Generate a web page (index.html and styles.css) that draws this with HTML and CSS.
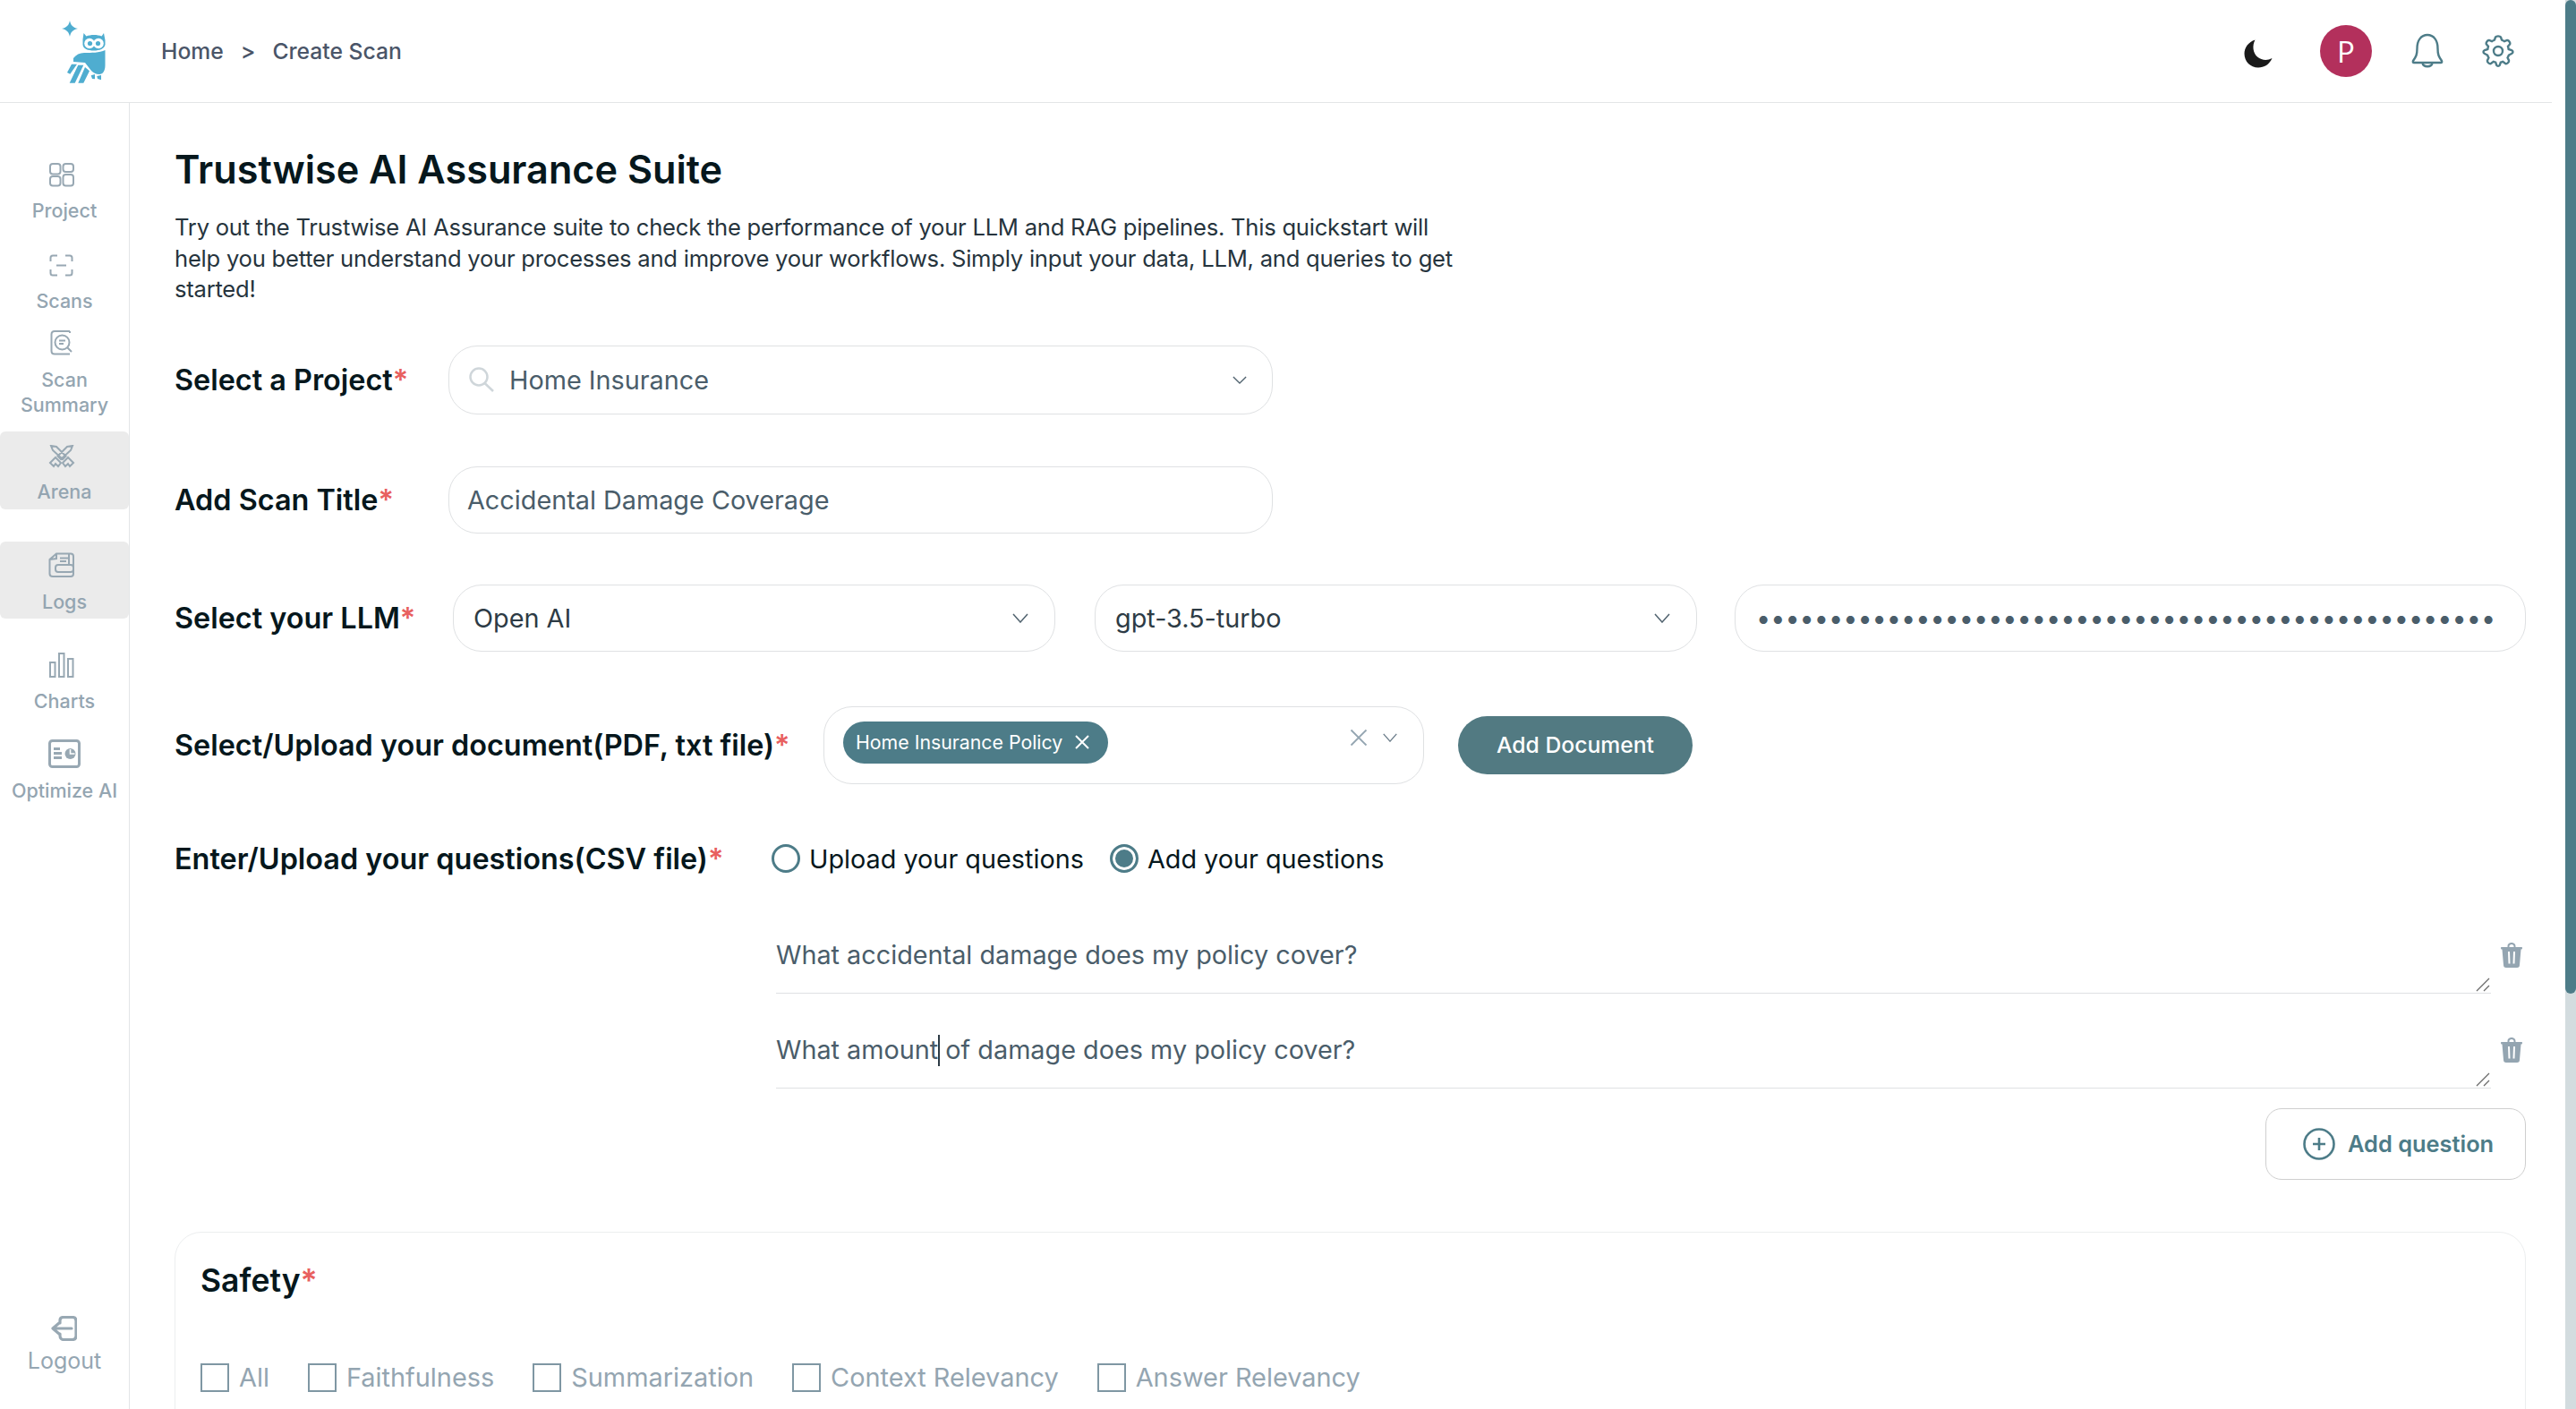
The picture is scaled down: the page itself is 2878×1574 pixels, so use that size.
FILE: index.html
```html
<!DOCTYPE html>
<html lang="en">
<head>
<meta charset="utf-8">
<title>Create Scan</title>
<link rel="stylesheet" href="styles.css">
</head>
<body>
<div class="app">
  <div class="page">
    <header class="topbar">
      <div class="logo-cell">
        <svg class="logo" viewBox="0 0 60 72" width="60" height="72">
          <path class="logo-fill" d="M10 2 C11 7 13 9.500 19 11 C13 12.500 11 15 10 20 C9 15 7 12.500 1 11 C7 9.500 9 7 10 2Z"/>
          <path class="logo-fill" d="M25.500 16 L28.500 19.500 C33 17.500 41 17.500 45.500 19.500 L48 16 L49.500 24 L49.500 29 C48.500 33.500 43 35.500 37 35.500 C30 35.500 25 33.500 24.500 29 L24.500 23Z"/>
          <circle class="logo-eye" cx="32" cy="27.500" r="5.800"/>
          <circle class="logo-eye" cx="42" cy="27.500" r="5.800"/>
          <circle class="logo-fill" cx="32.500" cy="27.500" r="2.600"/>
          <circle class="logo-fill" cx="41.500" cy="27.500" r="2.600"/>
          <path class="logo-fill" d="M14 44 C17 40 21 38 26 38 C34 38 43 38 49.500 35 L49.500 52 C49.500 58 47 62 43 62 C39 62 36 60 34 58 L27 49 L14 48Z"/>
          <path class="logo-fill" d="M12 50.700 L18 50.700 L10.300 61.700 L7 60Z M19.300 51.700 L25.300 51.700 L15.700 71.700 L9.700 71.700Z M27 54 L32 58.300 L25.300 71.700 L19.300 71.700Z M33.700 63.300 L38 62 L38 67.300 L35 67Z M40.300 64 L45 63 L45 68.300 L41 67Z"/>
        </svg>
      </div>
      <nav class="crumbs"><span>Home</span><span class="crumb-sep">&gt;</span><span>Create Scan</span></nav>
      <div class="top-actions">
        <svg class="moon" viewBox="0 0 32 32" width="32" height="32"><path d="M12.500 0.500 C9 7 10 15 15 19.500 C20 23.500 26 24 31.500 21 C28.500 28 22.500 31.500 16 31.500 C7 31.500 0.500 24.500 0.500 16 C0.500 9 5 3 12.500 0.500Z"/></svg>
        <div class="avatar">P</div>
        <svg class="bell" viewBox="0 0 36 40" width="36" height="40"><path d="M6.500 17 C6.500 8 11 2 18 2 C25 2 29.500 8 29.500 17 C29.500 24 30.500 26 34 31 C34.500 32.500 34 33 33 33 L3 33 C2 33 1.500 32.500 2 31 C5.500 26 6.500 24 6.500 17Z M12.500 33.500 C13.500 38.500 22.500 38.500 23.500 33.500"/></svg>
        <svg class="gear" viewBox="0 0 36 36" width="36" height="36"><circle cx="18" cy="18" r="5"/><path d="M15 2.500 C16 1 20 1 21 2.500 L22 5.500 C23 6.200 24 6.600 25 7.200 L28 6 C30 5.600 32 9 31 10.500 L29 12.800 C29.400 14 29.500 15 29.700 16 L33 17 C35 18 35 20 33 21 L30 22.500 C29.600 23.600 29.200 24.600 28.600 25.500 L30 28.500 C30.500 30.500 27.500 33 25.800 31.800 L23.200 29.800 C22.200 30.200 21.400 30.500 20.800 30.700 L19.800 33.800 C19 35 17 35 16.200 33.800 L15.200 30.700 C14.400 30.500 13.600 30.200 12.800 29.800 L10.200 31.800 C8.500 33 5.500 30.500 6 28.500 L7.400 25.500 C6.800 24.600 6.400 23.600 6 22.500 L3 21 C1 20 1 18 3 17 L6.300 16 C6.500 15 6.600 14 7 12.800 L5 10.500 C4 9 6 5.600 8 6 L11 7.200 C12 6.600 13 6.200 14 5.500Z"/></svg>
      </div>
    </header>
    <div class="body-row">
      <aside class="sidebar">
        <a class="nav-item nav-project">
          <svg class="nav-icon" viewBox="0 0 28 27" width="28" height="27"><rect x="1" y="1" width="11.500" height="11.500" rx="3"/><rect x="15.500" y="1" width="11.500" height="9" rx="3"/><rect x="1" y="15" width="11.500" height="10.500" rx="3"/><rect x="15.500" y="13" width="11.500" height="12.500" rx="3"/></svg>
          <span>Project</span>
        </a>
        <a class="nav-item nav-scans">
          <svg class="nav-icon" viewBox="0 0 28 25" width="28" height="25"><path d="M1.500 8 V4 C1.500 2.500 2.500 1.500 4 1.500 H9 M18 1.500 H23 C24.500 1.500 25.500 2.500 25.500 4 V8 M1.500 17 V21 C1.500 22.500 2.500 23.500 4 23.500 H9 M18 23.500 H23 C24.500 23.500 25.500 22.500 25.500 21 V17 M8 12.500 H19"/></svg>
          <span>Scans</span>
        </a>
        <a class="nav-item nav-summary">
          <svg class="nav-icon" viewBox="0 0 26 28" width="26" height="28"><path d="M22 1 H5 C3 1 1.500 2.500 1.500 4.500 V23 C1.500 25 3 26.500 5 26.500 H22 M22 1 V3"/><circle cx="13.500" cy="13.500" r="8"/><path d="M10 11.500 H17 M10 15 H15 M19.500 19.500 L24 24"/></svg>
          <span>Scan<br>Summary</span>
        </a>
        <a class="nav-item nav-arena is-active">
          <svg class="nav-icon" viewBox="0 0 30 26" width="30" height="26"><path d="M3 1 L9 2 L19.500 12.500 L16 16 L5 6Z M27 1 L21 2 L10.500 12.500 L14 16 L25 6Z M2 20 L8 14 L14 20 L11 24 L8 21 L6 24Z M28 20 L22 14 L16 20 L19 24 L22 21 L24 24Z"/></svg>
          <span>Arena</span>
        </a>
        <a class="nav-item nav-logs is-active">
          <svg class="nav-icon" viewBox="0 0 30 28" width="30" height="28"><path d="M9 1.500 H25 C27 1.500 28 2.500 28 4.500 V24 C28 26 27 27 25 27 H5 C3 27 1.500 26 1.500 24 V8 Z M9 1.500 V7 L1.500 8"/><rect x="8" y="14" width="20" height="8" rx="3"/><path d="M13 6.500 H22 M13 10 H20 M23 2 V14"/></svg>
          <span>Logs</span>
        </a>
        <a class="nav-item nav-charts">
          <svg class="nav-icon" viewBox="0 0 28 28" width="28" height="28"><rect x="1" y="11" width="5.500" height="16"/><rect x="11" y="1" width="5.500" height="26"/><rect x="21" y="7" width="5.500" height="20"/></svg>
          <span>Charts</span>
        </a>
        <a class="nav-item nav-optimize">
          <svg class="nav-icon nav-icon-bold" viewBox="0 0 36 32" width="36" height="32"><rect x="1.500" y="1.500" width="33" height="29" rx="3"/><path d="M6 10.500 H13 M6 15.500 H15 M6 20.500 H15"/><circle class="nav-icon-solid" cx="24.500" cy="16" r="6"/><path class="pie-cut" d="M24.500 11 V16 H29.500"/></svg>
          <span>Optimize AI</span>
        </a>
        <a class="nav-item nav-logout">
          <svg class="logout-icon" viewBox="0 0 30 28" width="30" height="28"><path d="M11 8 V5 C11 2.500 13 1.500 15 1.500 H25 C27.500 1.500 29 3 29 5.500 V22.500 C29 25 27.500 26.500 25 26.500 H15 C13 26.500 11 25 11 22 V20 M24 14 H4 M10 8 L3 14 L10 20"/></svg>
          <span>Logout</span>
        </a>
      </aside>
      <main class="content">
        <h1 class="title">Trustwise AI Assurance Suite</h1>
        <p class="intro">Try out the Trustwise AI Assurance suite to check the performance of your LLM and RAG pipelines. This quickstart will help you better understand your processes and improve your workflows. Simply input your data, LLM, and queries to get started!</p>

        <div class="row row-project">
          <label class="field-label label-short">Select a Project<em>*</em></label>
          <div class="box box-wide">
            <svg class="search-icon" viewBox="0 0 28 28" width="28" height="28"><circle cx="11" cy="11" r="9.500"/><path d="M17.500 18 L27 27"/></svg>
            <span class="value value-muted">Home Insurance</span>
            <svg class="chevron chevron-small" viewBox="0 0 18 10" width="16" height="9"><path d="M1 1 L9 9 L17 1"/></svg>
          </div>
        </div>

        <div class="row row-title">
          <label class="field-label label-short">Add Scan Title<em>*</em></label>
          <div class="box box-wide box-title"><span class="value value-muted">Accidental Damage Coverage</span></div>
        </div>

        <div class="row row-llm">
          <label class="field-label label-llm">Select your LLM<em>*</em></label>
          <div class="box box-llm"><span class="value">Open AI</span><svg class="chevron" viewBox="0 0 18 11" width="18" height="11"><path d="M1 1 L9 10 L17 1"/></svg></div>
          <div class="box box-llm box-model"><span class="value">gpt-3.5-turbo</span><svg class="chevron" viewBox="0 0 18 11" width="18" height="11"><path d="M1 1 L9 10 L17 1"/></svg></div>
          <div class="box box-key"><span class="dots">•••••••••••••••••••••••••••••••••••••••••••••••••••</span></div>
        </div>

        <div class="row row-doc">
          <label class="field-label label-doc">Select/Upload your document(PDF, txt file)<em>*</em></label>
          <div class="box box-doc">
            <span class="chip">Home Insurance Policy<svg class="chip-x" viewBox="0 0 18 18" width="18" height="18"><path d="M2 2 L16 16 M16 2 L2 16"/></svg></span>
            <svg class="clear-x" viewBox="0 0 20 20" width="20" height="20"><path d="M1.500 1.500 L18.500 18.500 M18.500 1.500 L1.500 18.500"/></svg>
            <svg class="chevron chevron-doc" viewBox="0 0 18 11" width="20" height="10"><path d="M1 1 L9 10 L17 1"/></svg>
          </div>
          <button class="btn-primary" type="button">Add Document</button>
        </div>

        <div class="row row-radio">
          <label class="field-label label-questions">Enter/Upload your questions(CSV file)<em>*</em></label>
          <span class="radio"></span><span class="radio-text">Upload your questions</span>
          <span class="radio radio-on"></span><span class="radio-text">Add your questions</span>
        </div>

        <div class="questions">
          <div class="q-row">
            <div class="q-input">What accidental damage does my policy cover?<svg class="grip" viewBox="0 0 16 16" width="16" height="16"><path d="M1 15 L15 1 M9 15 L15 9"/></svg></div>
            <svg class="trash" viewBox="0 0 24 28" width="24" height="28"><path d="M7.500 5 V4 C7.500 1 10 0 12 0 C14 0 16.500 1 16.500 4 V5 H23 C23.800 5 24 5.500 24 6 C24 7 23.500 7.500 22.500 7.500 L21 25 C21 27 20 28 18 28 H6 C4 28 3 27 3 25 L1.500 7.500 C0.500 7.500 0 7 0 6 C0 5.500 0.200 5 1 5Z M9.500 5 H14.500 V4 C14.500 3 13.500 2 12 2 C10.500 2 9.500 3 9.500 4Z M8 10 L8.500 23.500 H10.500 L10 10Z M14 10 L13.500 23.500 H15.500 L16 10Z" fill-rule="evenodd"/></svg>
          </div>
          <div class="q-row q-row-next">
            <div class="q-input">What amount<span class="caret"></span> of damage does my policy cover?<svg class="grip" viewBox="0 0 16 16" width="16" height="16"><path d="M1 15 L15 1 M9 15 L15 9"/></svg></div>
            <svg class="trash" viewBox="0 0 24 28" width="24" height="28"><path d="M7.500 5 V4 C7.500 1 10 0 12 0 C14 0 16.500 1 16.500 4 V5 H23 C23.800 5 24 5.500 24 6 C24 7 23.500 7.500 22.500 7.500 L21 25 C21 27 20 28 18 28 H6 C4 28 3 27 3 25 L1.500 7.500 C0.500 7.500 0 7 0 6 C0 5.500 0.200 5 1 5Z M9.500 5 H14.500 V4 C14.500 3 13.500 2 12 2 C10.500 2 9.500 3 9.500 4Z M8 10 L8.500 23.500 H10.500 L10 10Z M14 10 L13.500 23.500 H15.500 L16 10Z" fill-rule="evenodd"/></svg>
          </div>
          <div class="q-actions">
            <button class="btn-add" type="button">
              <svg class="plus" viewBox="0 0 36 36" width="36" height="36"><circle cx="18" cy="18" r="16.500"/><path d="M18 11 V25 M11 18 H25"/></svg>
              Add question
            </button>
          </div>
        </div>

        <section class="card">
          <h2 class="card-title">Safety<em>*</em></h2>
          <div class="checks">
            <label class="check check-all"><span class="box-check"></span>All</label>
            <label class="check check-next"><span class="box-check"></span>Faithfulness</label>
            <label class="check check-next"><span class="box-check"></span>Summarization</label>
            <label class="check check-next"><span class="box-check"></span>Context Relevancy</label>
            <label class="check"><span class="box-check"></span>Answer Relevancy</label>
          </div>
        </section>
      </main>
    </div>
  </div>
  <div class="scrollbar"><div class="scrollbar-thumb"></div></div>
</div>
</body>
</html>
```
FILE: styles.css
```css
* { box-sizing: border-box; }
html, body { margin: 0; height: 100%; }
body { font-family: Inter, "Liberation Sans", sans-serif; background: #fff; color: #06171c; overflow: hidden; }

.app { display: flex; height: 1574px; overflow: hidden; }
.page { flex: 1; min-width: 0; display: flex; flex-direction: column; }
.scrollbar { width: 12px; background: #d3dcdf; }
.scrollbar-thumb { height: 1110px; background: #4d7c88; border-radius: 6px; }

.topbar { height: 115px; flex: none; display: flex; align-items: center; border-bottom: 1px solid #e3e5e7; margin-right: 15px; }
.logo-cell { width: 180px; padding-left: 68px; display: flex; }
.logo-fill { fill: #4fadd0; }
.logo-eye { fill: #fff; }
.crumbs { display: flex; align-items: center; font-size: 24.700px; font-weight: 500; color: #4a5568; gap: 19px; }
.crumb-sep { font-size: 25px; }
.top-actions { margin-left: auto; display: flex; align-items: center; padding-right: 42px; }
.moon { fill: #1a1a1a; margin-right: 53px; margin-top: 6px; }
.avatar { width: 58px; height: 58px; border-radius: 50%; background: #b3305c; color: #fff; display: flex; align-items: center; justify-content: center; font-size: 33px; font-family: "Open Sans", sans-serif; margin-right: 44px; }
.bell, .gear { fill: none; stroke: #4d7c88; stroke-width: 2.400; }
.bell { margin-right: 43px; }

.body-row { flex: 1; display: flex; min-height: 0; }
.sidebar { width: 145px; flex: none; border-right: 1px solid #e3e5e7; display: flex; flex-direction: column; padding-top: 67px; }
.nav-item { display: flex; flex-direction: column; align-items: center; gap: 13px; color: #94a5b1; font-size: 21.500px; font-weight: 500; line-height: 28px; text-align: center; }
.nav-item svg { display: block; }
.nav-icon { fill: none; stroke: #98a8b3; stroke-width: 2; margin-right: 7px; }
.nav-icon-bold { stroke-width: 3; margin-right: 0; }
.nav-icon-solid { fill: #98a8b3; stroke: none; }
.pie-cut { stroke: #fff; stroke-width: 1.600; }
.nav-item.is-active { background: #ebebeb; border-radius: 6px; width: 144px; }
.nav-project { gap: 12px; }
.nav-scans { margin-top: 35px; }
.nav-summary { margin-top: 19px; }
.nav-arena { margin-top: 16px; padding: 15px 0 6px; gap: 12px; }
.nav-logs { margin-top: 36px; padding: 12px 0 5px; }
.nav-charts { margin-top: 38px; gap: 12px; }
.nav-optimize { margin-top: 29px; gap: 11px; }
.nav-logout { margin-top: auto; margin-bottom: 39px; gap: 7px; color: #95a6b2; font-size: 25px; font-weight: 400; line-height: 30px; }
.logout-icon { fill: none; stroke: #98a8b3; stroke-width: 3.200; stroke-linecap: round; stroke-linejoin: round; margin-right: 2px; }

.content { flex: 1; min-width: 0; padding: 46px 44px 0 50px; overflow: hidden; }
.title { margin: 0; font-size: 43.200px; line-height: 56px; font-weight: 600; color: #06171c; }
.intro { margin: 20px 0 0; width: 1440px; font-size: 25.600px; line-height: 34.500px; letter-spacing: -0.240px; color: #26343d; }

.row { display: flex; align-items: center; }
.row-project { margin-top: 45px; }
.row-title { margin-top: 58px; }
.row-llm { margin-top: 57px; }
.row-doc { margin-top: 61px; }
.row-radio { margin-top: 67px; }

.field-label { font-size: 32.400px; line-height: 33px; font-weight: 600; color: #06171c; flex: none; white-space: nowrap; }
em { color: #e8605f; font-style: normal; }
.label-short { width: 306px; }
.label-llm { width: 311px; }
.label-doc { width: 725px; }
.label-questions { width: 667px; }

.box { display: flex; align-items: center; background: #fff; border: 1px solid #dfe1e3; border-radius: 32px; flex: none; }
.box-wide { width: 921px; height: 77px; padding: 0 28px 0 22px; }
.box-title { height: 75px; padding-left: 20px; }
.box-llm { width: 673px; height: 75px; padding: 0 29px 0 22px; justify-content: space-between; }
.box-model { margin-left: 44px; }
.box-key { width: 884px; height: 75px; margin-left: 42px; padding-left: 23px; }
.box-doc { width: 671px; height: 87px; padding: 0 27px 6px 21px; }

.value { font-size: 28.800px; color: #2d3b45; }
.value-muted { color: #4a5d6a; }
.search-icon { fill: none; stroke: #cfd6da; stroke-width: 2.500; margin-right: 17px; }
.chevron { fill: none; stroke: #51636f; stroke-width: 1.500; flex: none; }
.chevron-small { margin-left: auto; }
.dots { font-size: 28.800px; color: #4a5d6a; white-space: nowrap; }

.chip { display: inline-flex; align-items: center; height: 47px; width: 296px; padding: 0 14px; background: #4d7c88; color: #fff; font-size: 21.300px; border-radius: 24px; white-space: nowrap; }
.chip-x { fill: none; stroke: #fff; stroke-width: 2; margin-left: 13px; flex: none; }
.clear-x { fill: none; stroke: #94a5b1; stroke-width: 1.800; margin-left: auto; margin-bottom: 11px; }
.chevron-doc { margin: 0 0 11px 15px; stroke: #6b7d8a; }

.btn-primary { width: 262px; height: 65px; margin-left: 38px; border: 0; border-radius: 33px; background: #527a82; color: #fff; font: 500 24.700px Inter, sans-serif; }

.radio-text { font-size: 28.800px; line-height: 33px; color: #06171c; white-space: nowrap; }
.radio { width: 32px; height: 32px; border-radius: 50%; border: 3px solid #4d7c88; margin-right: 10px; flex: none; background: #fff; }
.radio-on { background: #4d7c88; box-shadow: inset 0 0 0 3px #fff; margin-left: 29px; }

.questions { margin-left: 672px; margin-top: 61px; }
.q-row { display: flex; align-items: flex-start; }
.q-row-next { margin-top: 33px; }
.q-input { position: relative; width: 1916px; height: 73px; padding-top: 13px; border-bottom: 1px solid #dfe1e3; font-size: 28.800px; line-height: 34px; color: #4a5d6a; }
.grip { position: absolute; right: 1px; bottom: 1px; fill: none; stroke: #6a6a6a; stroke-width: 1.300; }
.caret { display: inline-block; width: 2px; height: 35px; margin-right: -2px; background: #2d3b45; vertical-align: -8px; }
.trash { fill: #94a5b1; margin: 16px 0 0 11px; flex: none; }
.q-actions { display: flex; justify-content: flex-end; margin-top: 22px; }
.btn-add { display: flex; align-items: center; width: 291px; height: 80px; padding: 0 0 0 41px; border: 1px solid #cfcfcf; border-radius: 18px; background: #fff; color: #4d7c88; font: 600 25.400px Inter, sans-serif; gap: 14px; }
.plus { fill: none; stroke: #4d7c88; stroke-width: 2.600; }

.card { margin-top: 58px; height: 400px; border: 1px solid #eceeef; border-radius: 30px; padding: 31px 28px; }
.card-title { margin: 0; font-size: 35.500px; line-height: 46px; font-weight: 600; color: #06171c; }
.checks { display: flex; margin-top: 69px; }
.check { display: flex; align-items: center; font-size: 28.900px; line-height: 32px; color: #94a5b1; white-space: nowrap; }
.box-check { width: 32px; height: 32px; border: 2px solid #7f97a3; margin-right: 11px; flex: none; }
.check-all { margin-right: 43px; }
.check-next { margin-right: 43px; }
```
